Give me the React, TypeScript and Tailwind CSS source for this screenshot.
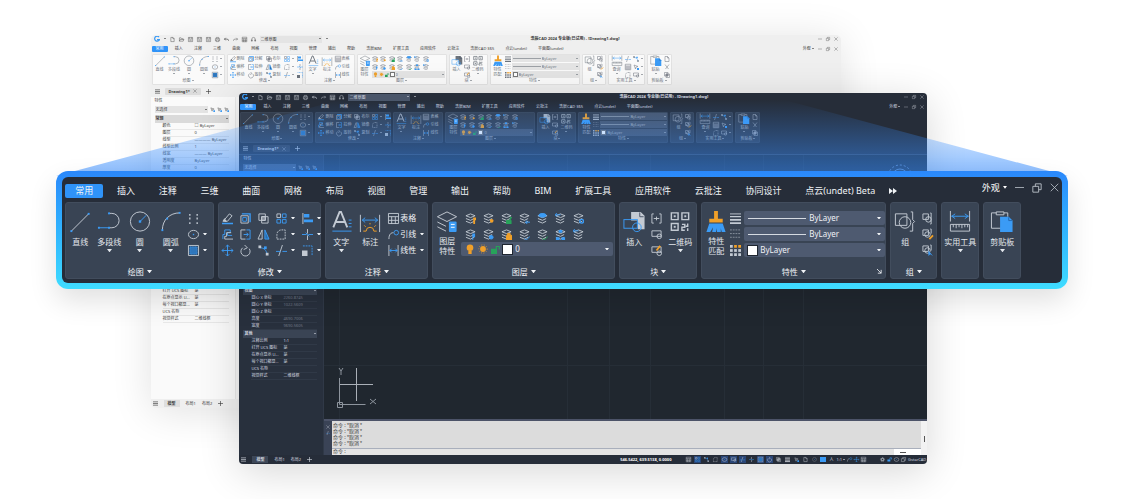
import type { ReactNode } from "react";
import clsx from "clsx";

const BLUE = "#3b9bf5";
const ORANGE = "#f0a029";
const GREEN = "#27a35a";

type Theme = "light" | "dark";

const Dot = ({ x, y, s = 2, fill = BLUE }: { x: number; y: number; s?: number; fill?: string }) => (
  <rect x={x - s / 2} y={y - s / 2} width={s} height={s} fill={fill} stroke="none" />
);

// Large tool icons, 24 x 24
const large: Record<string, ReactNode> = {
  line: <><path d="M3 22 21 4" /><Dot x={3} y={22} /><Dot x={21} y={4} /></>,
  polyline: <><path d="M12 3.500h3a7.500 7.500 0 0 1 0 15h-3" /><path d="M2 18.500h10" stroke={BLUE} /><Dot x={12} y={3.5} /><Dot x={1.5} y={18.500} /><Dot x={12} y={18.500} /></>,
  circle: <><circle cx="12" cy="12" r="10" /><path d="m12 12 6.500-6.500" stroke={BLUE} /><Dot x={12} y={12} s={2.5} /></>,
  arc: <><path d="M3 21C3 10 11 3 21 3" /><Dot x={3} y={21} /><Dot x={8} y={9} /><Dot x={21} y={3} /></>,
  text: <><path d="M4 18 10.500 2h1.500L18.500 18M6.500 12.500H16" strokeWidth="2" /><path d="M3 22h20M20 10.500h3M20 14h3M20 17.500h3" stroke={BLUE} /></>,
  dimension: <><path d="M2 5v18M22 5v18" /><path d="M4 10.500h16M7 8l-3 2.500L7 13M17 8l3 2.500-3 2.500" stroke={BLUE} /><path d="M5 22h3a4 4 0 0 1 8 0h3M12 15v-1.500M7.500 17.500 6 16M16.500 17.500 18 16" stroke={ORANGE} /></>,
  layers: <><path d="M2 7 12 2l10 5-10 5zM2 12.500l9 4.500M2 17.500l9 4.500" /><rect x="14" y="12" width="8" height="11" rx="1" fill={BLUE} stroke="none" /><path d="M16 15h4M16 18h4" stroke="#fff" /></>,
  insert: <><path d="M9 2h10l4 4v14h-7v-9H9z" fill="currentColor" stroke="none" /><path d="M18 2.500V7h4" stroke="#4a5568" /><rect x="1.500" y="10" width="14" height="9" stroke={BLUE} /><circle cx="15" cy="18" r="4.500" stroke={BLUE} /></>,
  qr: <><path d="M3 3h7v7H3zM14 3h7v7h-7zM3 14h7v7H3zM14 15h3v3h-3v3h3M20 14v3h-2M20 19v3" strokeWidth="1.500" /><Dot x={6.5} y={6.5} fill="currentColor" /><Dot x={17.5} y={6.5} fill="currentColor" /><Dot x={6.500} y={17.500} fill="currentColor" /></>,
  brush: <><path d="M10 1h4v8h5v4H5V9h5z" fill={ORANGE} stroke="none" /><path d="M5 14h14l3 9h-4l-1-4v4h-4v-4l-1 4H8l1-5-3 5H2z" fill={BLUE} stroke="none" /></>,
  group: <><path d="M2 4h12v12H2z" /><circle cx="12" cy="13" r="6" /><path d="M18 2h2v8l2 2-2 2v8h-3" /></>,
  measure: <><path d="M2 1v11M22 1v11" /><path d="M3 6.500h18M7 4 3.500 6.500 7 9M17 4l3.500 2.500L17 9" stroke={BLUE} /><path d="M2 15h20v7H2zM5 15v3M8 15v4M11 15v3M14 15v4M17 15v3M20 15v3" /></>,
  clipboard: <><path d="M12 19H1V3h5M14 3h4v4M6 5V2h8v3z" /><path d="M10 7h9l4 4v12H10z" fill={BLUE} stroke="none" /><path d="M19 7.500V11h3.500" stroke="#2468b0" /></>,
};

// Compact tool icons, 12 x 12
const small: Record<string, ReactNode> = {
  points: <path d="M2 1v2M2 5v2M2 10v2M10 1v2M10 5v2M10 10v2" strokeWidth="1.500" />,
  ellipse: <><ellipse cx="6" cy="6" rx="5.500" ry="4.500" /><Dot x={6} y={6} s={1.500} /></>,
  hatch: <><path d="M.5.5h11v11H.5z" /><path d="M2 2h8v8H2z" fill="#2f76bb" stroke={BLUE} strokeDasharray="1 1" /></>,
  erase: <><path d="m3 7 5-6 3 2-5 6H3z" /><path d="M3 6 1 9h4" fill="currentColor" /><path d="M0 11.500h12" stroke={BLUE} strokeWidth="1.500" /></>,
  explode: <><path d="M1 3h8v8H1z" /><path d="M2 1h9v9" stroke={BLUE} strokeWidth="1.500" /><path d="M3 5h4v4H3z" stroke={BLUE} /></>,
  overlap: <><path d="M1 1h7v7H1zM4 4h7v7H4z" /><path d="M4 4h4v4H4z" fill="currentColor" fillOpacity=".5" /></>,
  array: <><path d="M1 1h4v4H1z" /><path d="M7 1h4v4H7zM1 7h4v4H1zM7 7h4v4H7z" stroke={BLUE} /></>,
  align: <><path d="M1 0v12" /><path d="M2 1h6v4H2zM2 7h10v3H2z" fill={BLUE} stroke="none" /></>,
  offset: <><path d="M1 11V6h2V1h6v3H6v3h5" stroke={BLUE} /><path d="M3 11V8h2V4h5M3 11h9" /></>,
  stretch: <><path d="M6 1H1v10h5" /><path d="M7 1h4v10H7M4 6h5M7 4l2 2-2 2" stroke={BLUE} /></>,
  mirror: <><path d="M4.500 1v10H0z" /><path d="M7.500 1v10H12z" stroke={BLUE} fill="#286ead" /></>,
  fillet: <path d="M1 11h9V1H6a5 5 0 0 0-5 5z" strokeDasharray="2 1" />,
  break: <><path d="M6 0v5M6 7v5" /><path d="M0 6h5M7 6h5M4 4l2 2M8 8 6 6" stroke={BLUE} /></>,
  move: <path d="M6 0v12M0 6h12M4 2l2-2 2 2M4 10l2 2 2-2M2 4 0 6l2 2M10 4l2 2-2 2" stroke={BLUE} />,
  rotate: <><path d="M3 3a5 5 0 1 0 7 1" /><path d="m5 0 3 3-4 2" /></>,
  copy: <><path d="M2 3c5 0 7 3 8 7" stroke={BLUE} /><Dot x={2} y={2} s={3} fill="currentColor" /><Dot x={8} y={3} s={3} /><Dot x={10} y={10} s={3} fill="currentColor" /></>,
  trim: <><path d="M7 0 3 12" /><path d="M0 7h5M7 7h5" stroke={BLUE} /></>,
  scale: <><path d="M1 1h10v10" stroke={BLUE} strokeDasharray="2 1" /><path d="M0 6h6v6H0z" fill="currentColor" stroke="none" /></>,
  table: <path d="M.5.5h11v11H.5zM.5 4h11M.5 8h11M4 4v8M8 4v8" />,
  leader: <><path d="M1 11c0-5 2-7 5-7" /><circle cx="9" cy="4" r="2.500" stroke={BLUE} /></>,
  linear: <><path d="M1 0v12M11 0v12" /><path d="M2 6h8M4 4 2 6l2 2M8 4l2 2-2 2" stroke={BLUE} /></>,
  bracket: <path d="M3 1H1v10h2M9 1h2v10H9M3 6h6M6 4v4" />,
  block: <><path d="M1 2h10v6H1z" /><circle cx="9" cy="8" r="2.500" /></>,
  blockEdit: <><path d="M1 2h10v6H1z" /><circle cx="9" cy="9" r="2.500" /><path d="m6 6 4-5" stroke={ORANGE} strokeWidth="2" /></>,
  weights: <><path d="M0 1h12" /><path d="M0 4h12" strokeWidth="1.500" /><path d="M0 7.500h12M0 11h12" strokeWidth="2" /></>,
  dashes: <path d="M0 1h12M0 5h12M0 9h12" strokeDasharray="2 1" opacity=".6" />,
  colors: <>{[1.5, 6, 10.5].map((y) => [1.5, 6, 10.5].map((x) => <Dot key={`${x}-${y}`} x={x} y={y} s={3} fill={y < 6 && x > 2 ? ORANGE : "currentColor"} />))}</>,
  groupAdd: <><path d="M1 1h6v6H1zM9 0h1v12H9" /><circle cx="7" cy="7" r="3" /></>,
  groupEdit: <><path d="M1 1h6v6H1zM9 0h1v5" /><circle cx="6" cy="6" r="3" /><path d="m8 11 4-4" stroke={ORANGE} strokeWidth="2" /></>,
  groupPick: <><path d="M1 1h6v6H1zM9 0h1v6" /><circle cx="6" cy="6" r="3" /><path d="M7 6v6l2-2 3 2z" fill={BLUE} stroke="none" /></>,
  bulb: <><circle cx="6" cy="4.500" r="4" fill={ORANGE} stroke="none" /><path d="M4 8h4v4H4z" fill={ORANGE} stroke="none" /></>,
  sun: <><circle cx="6" cy="6" r="3.500" fill={ORANGE} stroke="none" /><circle cx="6" cy="6" r="5" stroke={ORANGE} strokeDasharray="1 2" /></>,
  lock: <><path d="M0 5h8v7H0z" fill={GREEN} stroke="none" /><path d="M7 6V2h4v4" stroke={GREEN} strokeWidth="1.500" /></>,
  file: <path d="M2 1h5l3 3v7H2zM7 1v3h3" />,
  open: <path d="M1 10V2h4l1 2h4v2M1 10l2-4h9l-2 4z" />,
  save: <path d="M1 1h10v10H1zM3 1v4h6V1M3 8h6" />,
  print: <path d="M3 4V1h6v3M3 9H1V4h10v5H9M3 7h6v4H3z" />,
  undo: <path d="M4 2 1 5l3 3M1 5h6q4 0 4 4" strokeWidth="1.500" />,
  redo: <path d="m8 2 3 3-3 3M11 5H5Q1 5 1 9" />,
  headset: <path d="M2 9V5a4 4 0 0 1 8 0v4M1 7h2v3H1zM9 7h2v3H9z" />,
  select: <><path d="m2 2 3 8 1-4 4-1z" /><path d="M8 8h4v4H8z" fill={BLUE} stroke="none" /></>,
  cut: <path d="m2 1 7 9M10 1 3 10" />,
  lockOpen: <><path d="M1 6h7v5H1z" fill={BLUE} stroke="none" /><path d="M7 6V2h4v4" stroke={BLUE} strokeWidth="1.500" /></>,
  gear: <><circle cx="6" cy="6" r="3" strokeWidth="2" /><circle cx="6" cy="6" r="5" strokeDasharray="2 2" /></>,
  menu: <path d="M0 2h12M0 6h12M0 10h12" strokeWidth="1.500" />,
  plus: <path d="M6 0v12M0 6h12" strokeWidth="1.500" />,
  close: <path d="m1 1 10 10M11 1 1 11" />,
  restore: <path d="M1 4h7v7H1zM4 4V1h7v7H8" />,
  minimize: <path d="M0 6h12" />,
};

const layerBadges = [
  <path d="M9 5h3v3h-1v4H9z" fill={ORANGE} stroke="none" />,
  <circle cx="9.500" cy="8.500" r="2" fill={ORANGE} stroke="none" />,
  <path d="M6 8h5v4H6zM10 8V5h2" fill={GREEN} stroke={GREEN} />,
  <path d="M7 10h5M9 8l-2 2 2 2" stroke={BLUE} />,
  <ellipse cx="6" cy="2.500" rx="4" ry="2" fill={BLUE} stroke={BLUE} />,
  <path d="M0 2h6M2 0 0 2l2 2" stroke={BLUE} />,
  <circle cx="9.500" cy="9" r="2" stroke={BLUE} strokeWidth="1.500" />,
  <path d="M8 5h3v4H9v3H8z" fill={BLUE} stroke="none" />,
  <circle cx="9" cy="9" r="2" fill={BLUE} stroke={BLUE} />,
  <path d="M6 7h6v5H6zM7 7V5h3v2" fill={ORANGE} stroke={ORANGE} />,
  <path d="m6 10 2 2 4-4" stroke={BLUE} />,
  <path d="m6 10 2 2 4-4" stroke={GREEN} />,
  <path d="M1 9h4v3H1zM7 9h4v3H7zM4 1h4v3H4z" fill={BLUE} stroke="none" />,
  <path d="M0 2h6M2 0 0 2l2 2" stroke={BLUE} />,
];

const Icon = ({ name, className }: { name: string; className: string }) => {
  const box = name in large ? "0 0 24 25" : "0 0 12 12";
  return (
    <svg viewBox={box} className={clsx("shrink-0 overflow-visible", className)} fill="none" stroke="currentColor" strokeWidth="1" aria-hidden="true">
      {large[name] ?? small[name]}
    </svg>
  );
};

const LayerIcon = ({ index, className }: { index: number; className: string }) => (
  <svg viewBox="0 0 12 12" className={clsx("shrink-0", className)} fill="none" stroke="currentColor" aria-hidden="true">
    <path d="m1 3 5-2 5 2-5 2zM1 6l5 2 4-2M1 9l5 2 4-2" />
    {layerBadges[index]}
  </svg>
);

const Caret = ({ className = "w-[5px]" }: { className?: string }) => (
  <svg viewBox="0 0 6 4" className={clsx("shrink-0", className)} fill="currentColor" aria-hidden="true">
    <path d="M0 0h6L3 4z" />
  </svg>
);

/* ---------- enlarged ribbon ---------- */

const Panel = ({ title, className, corner, children }: { title?: string; className: string; corner?: boolean; children: ReactNode }) => (
  <section className={clsx("relative flex h-[77px] shrink-0 flex-col rounded-[3px] border border-[#424d5d] bg-[#394454] pt-[7px]", className)}>
    <div className="flex flex-1">{children}</div>
    {title && (
      <button className="flex h-[13px] items-center justify-center gap-[3px]">
        {title}
        <Caret />
      </button>
    )}
    {corner && (
      <svg viewBox="0 0 6 6" className="absolute right-[3px] bottom-1 w-[5px]" fill="none" stroke="currentColor"><path d="m0 0 5 5M5 1v4H1" /></svg>
    )}
  </section>
);

const Tool = ({ icon, label, caret, className }: { icon: string; label: string | string[]; caret?: boolean; className: string }) => (
  <button className={clsx("flex shrink-0 flex-col items-center text-[#e3e7ec]", className)}>
    <Icon name={icon} className="size-6 text-[#c3cad3]" />
    {Array.isArray(label) ? (
      <span className="pt-[2px] leading-[10px]">{label[0]}<br />{label[1]}</span>
    ) : (
      <span className="h-[14px] leading-[15px] whitespace-nowrap">{label}</span>
    )}
    {caret && <Caret className="mt-px w-[5px]" />}
  </button>
);

const MiniTool = ({ icon, caret, label }: { icon: string; caret?: boolean; label?: string }) => (
  <button className="flex h-4 items-center gap-px" aria-label={label ? undefined : icon}>
    <Icon name={icon} className="size-[11px] text-[#c3cad3]" />
    {label}
    {caret && <Caret className="ml-[3px] w-1" />}
  </button>
);

const BigSelect = ({ label, value, children }: { label: string; value: string; children: ReactNode }) => (
  <label className="flex h-[14px] items-center gap-[3px] rounded-[2px] bg-[#4e5a70] px-1">
    {children}
    <select aria-label={label} className="h-[14px] min-w-0 flex-1 appearance-none bg-transparent text-[8px] leading-[14px] text-[#eef1f5]">
      <option>{value}</option>
    </select>
    <Caret className="w-1" />
  </label>
);

const modifyIcons = [
  ["erase", "explode", "overlap", "array", "align"],
  ["offset", "stretch", "mirror", "fillet", "break"],
  ["move", "rotate", "copy", "trim", "scale"],
];

const bigTabs = ["常用", "插入", "注释", "三维", "曲面", "网格", "布局", "视图", "管理", "输出", "帮助", "BIM", "扩展工具", "应用软件", "云批注", "协同设计", "点云(undet) Beta"];

const MagnifiedRibbon = () => (
  <div className="absolute top-[171px] right-[5%] left-[5%] rounded-[12px] bg-linear-to-b from-[#2b88fb] to-[#3fdcff] p-[6px] shadow-[0_12px_28px_rgba(0,0,0,0.12)]">
    <div className="overflow-hidden rounded-[6px] bg-[#262d39] px-[3px] pb-1 text-[8px] text-[#f0f3f6]">
      <header className="flex h-[25px] items-center">
        <nav className="flex w-[832px] items-center justify-between pt-[3px] text-[9px]">
          {bigTabs.map((tab, i) => (
            <button key={tab} className={clsx("h-[14px] px-[10px] leading-[14px] whitespace-nowrap", i === 0 && "rounded-[2px] bg-[#2f93f8]")}>{tab}</button>
          ))}
          <button aria-label="更多">
            <svg viewBox="0 0 8 6" className="w-2" fill="currentColor"><path d="m0 0 4 3-4 3zM4 0l4 3-4 3z" /></svg>
          </button>
        </nav>
        <div className="ml-auto flex items-center gap-2 pb-1 text-[#c6ccd4]">
          <button className="flex items-center gap-[3px] text-[9px] text-white">外观<Caret className="w-1" /></button>
          <button aria-label="最小化"><Icon name="minimize" className="size-[9px]" /></button>
          <button aria-label="还原"><Icon name="restore" className="size-[10px]" /></button>
          <button aria-label="关闭"><Icon name="close" className="size-[9px]" /></button>
        </div>
      </header>

      <div className="flex gap-1">
        <Panel title="绘图" className="w-[149px]">
          <Tool icon="line" label="直线" className="w-7" />
          <Tool icon="polyline" label="多段线" caret className="w-[30px]" />
          <Tool icon="circle" label="圆" caret className="w-[31px]" />
          <Tool icon="arc" label="圆弧" caret className="w-[31px]" />
          <div className="ml-[2px] flex flex-col">
            <MiniTool icon="points" />
            <MiniTool icon="ellipse" caret />
            <MiniTool icon="hatch" caret />
          </div>
        </Panel>

        <Panel title="修改" className="w-[103px]">
          <div className="flex flex-1 flex-col px-[3px]">
            {modifyIcons.map((row) => (
              <div key={row[0]} className="flex gap-[7px]">
                {row.map((icon, i) => <MiniTool key={icon} icon={icon} caret={i > 2} />)}
              </div>
            ))}
          </div>
        </Panel>

        <Panel title="注释" className="w-[103px]">
          <Tool icon="text" label="文字" caret className="w-[30px]" />
          <Tool icon="dimension" label="标注" className="w-7" />
          <div className="ml-1 flex flex-col">
            <MiniTool icon="table" label="表格" />
            <MiniTool icon="leader" label="引线" caret />
            <MiniTool icon="linear" label="线性" caret />
          </div>
        </Panel>

        <Panel title="图层" className="w-[183px]">
          <Tool icon="layers" label={["图层", "特性"]} className="w-7" />
          <div className="flex flex-1 flex-col pr-px">
            <div className="grid w-[126px] grid-cols-7">
              {layerBadges.map((_, i) => (
                <button key={i} aria-label={`图层工具 ${i + 1}`} className="flex h-4 items-center justify-center">
                  <LayerIcon index={i} className="size-[11px] text-[#c3cad3]" />
                </button>
              ))}
            </div>
            <BigSelect label="图层" value="0">
              <Icon name="bulb" className="size-[10px]" />
              <Icon name="sun" className="size-[10px]" />
              <Icon name="lock" className="size-[9px]" />
              <span className="size-[9px] bg-white outline outline-[#1f2630]" />
            </BigSelect>
          </div>
        </Panel>

        <Panel title="块" className="w-[78px]">
          <Tool icon="insert" label="插入" className="w-7" />
          <div className="flex flex-col px-[3px]">
            <MiniTool icon="bracket" />
            <MiniTool icon="block" />
            <MiniTool icon="blockEdit" />
          </div>
          <Tool icon="qr" label="二维码" caret className="ml-px w-7" />
        </Panel>

        <Panel title="特性" corner className="w-[185px]">
          <Tool icon="brush" label={["特性", "匹配"]} className="w-7" />
          <div className="flex flex-col pr-[3px]">
            <MiniTool icon="weights" />
            <MiniTool icon="dashes" />
            <MiniTool icon="colors" />
          </div>
          <div className="flex flex-1 flex-col gap-[2px] pt-px">
            <BigSelect label="线宽" value="ByLayer"><span className="h-px w-[58px] bg-[#d5dae1]" /></BigSelect>
            <BigSelect label="线型" value="ByLayer"><span className="h-px w-[58px] bg-[#d5dae1]" /></BigSelect>
            <BigSelect label="颜色" value="ByLayer"><span className="size-[9px] bg-white outline outline-[#1f2630]" /></BigSelect>
          </div>
        </Panel>

        <Panel title="组" className="w-[47px]">
          <Tool icon="group" label="组" className="w-7" />
          <div className="ml-[3px] flex flex-col">
            <MiniTool icon="groupAdd" />
            <MiniTool icon="groupEdit" />
            <MiniTool icon="groupPick" />
          </div>
        </Panel>

        <Panel className="w-[38px]"><Tool icon="measure" label="实用工具" caret className="w-9" /></Panel>
        <Panel className="w-[38px]"><Tool icon="clipboard" label="剪贴板" caret className="w-9" /></Panel>
      </div>
    </div>
  </div>
);

/* ---------- application windows ---------- */

const skins = {
  light: {
    panel: "bg-[#fafafa] border-[#e2e2e2]",
    icon: "text-[#6c737c]",
    field: "bg-[#e4e4e4]",
    side: "bg-[#fafafa]",
    head: "bg-[#dadada]",
    rule: "border-[#e8e8e8]",
    active: "bg-[#dedede]",
  },
  dark: {
    panel: "bg-[#343e4e] border-[#3a4555]",
    icon: "text-[#a9b2be]",
    field: "bg-[#4a566a]",
    side: "bg-[#28303d]",
    head: "bg-[#3a4454]",
    rule: "border-[#303947]",
    active: "bg-[#3d4757]",
  },
};

const tabs = ["常用", "插入", "注释", "三维", "曲面", "网格", "布局", "视图", "管理", "输出", "帮助", "浩辰BIM", "扩展工具", "应用软件", "云批注", "浩辰CAD 365", "点云(undet)", "平面图(undet)"];

const quickIcons = ["file", "open", "save", "save", "save", "print", "undo", "redo", "table", "headset"];

const SmallPanel = ({ title, theme, className, children }: { title: string; theme: Theme; className: string; children: ReactNode }) => (
  <section className={clsx("flex h-[31px] shrink-0 flex-col rounded-[1px] border", skins[theme].panel, className)}>
    <div className="flex h-[23px] items-start">{children}</div>
    <button className="flex h-[6px] items-center justify-center gap-px leading-[6px]">{title}<Caret className="w-[2px]" /></button>
  </section>
);

const SmallTool = ({ icon, label, caret, className }: { icon: string; label: string | string[]; caret?: boolean; className: string }) => (
  <button className={clsx("flex shrink-0 flex-col items-center", className)}>
    <Icon name={icon} className="size-3" />
    <span className="leading-[5px] whitespace-nowrap">{Array.isArray(label) ? <>{label[0]}<br />{label[1]}</> : label}</span>
    {caret && <Caret className="mt-px w-[2px]" />}
  </button>
);

const SmallColumn = ({ icons, labels, caret }: { icons: string[]; labels?: string[]; caret?: boolean }) => (
  <div className="flex flex-col">
    {icons.map((icon, i) => (
      <button key={icon} className="flex h-2 items-center gap-px leading-[8px] whitespace-nowrap" aria-label={labels ? undefined : icon}>
        <Icon name={icon} className="size-[6px]" />
        {labels?.[i]}
        {caret && <Caret className="ml-px w-[2px]" />}
      </button>
    ))}
  </div>
);

const SmallSelect = ({ theme, label, value, children }: { theme: Theme; label: string; value: string; children?: ReactNode }) => (
  <label className={clsx("flex h-[7px] items-center gap-px px-px", skins[theme].field)}>
    {children}
    <select aria-label={label} className="h-[7px] min-w-0 flex-1 appearance-none bg-transparent text-[4px] leading-[7px]"><option>{value}</option></select>
    <Caret className="w-[2px]" />
  </label>
);

const WindowChrome = ({ theme }: { theme: Theme }) => (
  <>
    <div className="flex h-2 items-center gap-[4px] px-[3px]">
      <svg viewBox="0 0 12 12" className="w-[6px]" fill="none" stroke={BLUE} strokeWidth="2.500"><path d="M10 2a5 5 0 1 0 1 5H6" /></svg>
      <Caret className="w-[2px]" />
      {quickIcons.map((icon, i) => (
        <button key={i} aria-label={icon}><Icon name={icon} className="size-[5px]" /></button>
      ))}
      <div className="w-[62px]"><SmallSelect theme={theme} label="工作空间" value="二维草图" /></div>
      <Caret className="w-[2px]" />
      <h1 className="flex-1 pl-[199px] font-bold whitespace-nowrap">浩辰CAD 2024 专业版(已试用) - [Drawing1.dwg]</h1>
      <Icon name="minimize" className="size-1" />
      <Icon name="restore" className="size-1" />
      <Icon name="close" className="size-1" />
    </div>
    <div className="flex h-[11px] items-center pt-px pr-[3px] pl-px">
      <nav className="flex w-[416px] items-center justify-between">
        {tabs.map((tab, i) => (
          <button key={tab} className={clsx("h-[6px] px-1 leading-[6px] whitespace-nowrap", i === 0 && "rounded-[1px] bg-[#2f93f8] text-white")}>{tab}</button>
        ))}
      </nav>
      <div className="ml-auto flex items-center gap-1">
        <button className="flex items-center gap-px">外观<Caret className="w-[2px]" /></button>
        <Icon name="minimize" className="size-1" />
        <Icon name="restore" className="size-1" />
        <Icon name="close" className="size-1" />
      </div>
    </div>
  </>
);

const SmallRibbon = ({ theme }: { theme: Theme }) => (
  <div className={clsx("flex gap-[2px] px-px", skins[theme].icon)}>
    <SmallPanel theme={theme} title="绘图" className="w-[73px]">
      <SmallTool icon="line" label="直线" className="w-[14px]" />
      <SmallTool icon="polyline" label="多段线" caret className="w-[15px]" />
      <SmallTool icon="circle" label="圆" caret className="w-[15px]" />
      <SmallTool icon="arc" label="圆弧" caret className="w-[15px]" />
      <SmallColumn icons={["points", "ellipse", "hatch"]} caret />
    </SmallPanel>
    <SmallPanel theme={theme} title="修改" className="w-[76px]">
      <div className="flex gap-[3px] px-[2px]">
        <SmallColumn icons={["erase", "offset", "move"]} labels={["删除", "偏移", "移动"]} />
        <SmallColumn icons={["explode", "stretch", "rotate"]} labels={["分解", "拉伸", "旋转"]} />
        <SmallColumn icons={["overlap", "mirror", "copy"]} labels={["布尔", "镜像", "复制"]} />
        <SmallColumn icons={["array", "fillet", "trim"]} caret />
        <SmallColumn icons={["align", "break", "scale"]} caret />
      </div>
    </SmallPanel>
    <SmallPanel theme={theme} title="注释" className="w-[50px]">
      <SmallTool icon="text" label="文字" caret className="w-[14px]" />
      <SmallTool icon="dimension" label="标注" className="w-[15px]" />
      <SmallColumn icons={["table", "leader", "linear"]} labels={["表格", "引线", "线性"]} />
    </SmallPanel>
    <SmallPanel theme={theme} title="图层" className="w-[90px]">
      <SmallTool icon="layers" label={["图层", "特性"]} className="w-[14px]" />
      <div className="flex flex-1 flex-col pr-px">
        <div className="grid w-[60px] grid-cols-7">
          {layerBadges.map((_, i) => (
            <span key={i} className="flex h-2 items-center"><LayerIcon index={i} className="size-[6px]" /></span>
          ))}
        </div>
        <SmallSelect theme={theme} label="图层" value="0">
          <Icon name="bulb" className="size-[5px]" />
          <Icon name="sun" className="size-[5px]" />
          <Icon name="lock" className="size-[4px]" />
          <span className="size-[5px] border border-[#777] bg-white" />
        </SmallSelect>
      </div>
    </SmallPanel>
    <SmallPanel theme={theme} title="块" className="w-[39px]">
      <SmallTool icon="insert" label="插入" className="w-[14px]" />
      <SmallColumn icons={["bracket", "block", "blockEdit"]} />
      <SmallTool icon="qr" label="二维码" caret className="w-[16px]" />
    </SmallPanel>
    <SmallPanel theme={theme} title="特性" className="w-[90px]">
      <SmallTool icon="brush" label={["特性", "匹配"]} className="w-[14px]" />
      <SmallColumn icons={["weights", "dashes", "colors"]} />
      <div className="flex flex-1 flex-col gap-px pl-px">
        <SmallSelect theme={theme} label="线宽" value="ByLayer"><span className="h-px w-7 bg-current opacity-60" /></SmallSelect>
        <SmallSelect theme={theme} label="线型" value="ByLayer"><span className="h-px w-7 bg-current opacity-60" /></SmallSelect>
        <SmallSelect theme={theme} label="颜色" value="ByLayer"><span className="size-[5px] border border-[#777] bg-white" /></SmallSelect>
      </div>
    </SmallPanel>
    <SmallPanel theme={theme} title="组" className="w-6">
      <SmallTool icon="group" label="组" className="w-[14px]" />
      <SmallColumn icons={["groupAdd", "groupEdit", "groupPick"]} />
    </SmallPanel>
    <SmallPanel theme={theme} title="实用工具" className="w-[37px]">
      <SmallTool icon="measure" label="查询" caret className="w-4" />
      <div className="flex gap-[2px]">
        <SmallColumn icons={["trim", "table", "fillet"]} />
        <SmallColumn icons={["copy", "select", "block"]} caret />
      </div>
    </SmallPanel>
    <SmallPanel theme={theme} title="剪贴板" className="w-[25px]">
      <SmallTool icon="clipboard" label="粘贴" caret className="w-4" />
      <SmallColumn icons={["file", "cut", "overlap"]} />
    </SmallPanel>
  </div>
);

type Row = [string, string];

const generalRows: Row[] = [["颜色", "□ ByLayer"], ["图层", "0"], ["线型", "———— ByLayer"], ["线型比例", "1"], ["线宽", "——— ByLayer"], ["透明度", "ByLayer"], ["厚度", "0"]];
const viewRows: Row[] = [["圆心 X 坐标", "2260.8745"], ["圆心 Y 坐标", "1022.5609"], ["圆心 Z 坐标", ""], ["高度", "4690.7006"], ["宽度", "9690.5605"]];
const ucsRows: Row[] = [["打开 UCS 图标", "是"], ["在原点显示 U...", "是"], ["每个视口都显...", "是"], ["UCS 名称", ""], ["视觉样式", "二维线框"]];

const PropertyGroup = ({ theme, title, rows }: { theme: Theme; title?: string; rows: Row[] }) => (
  <div>
    {title && (
      <h3 className={clsx("flex h-2 items-center justify-between px-px font-bold", skins[theme].head)}>{title}<Caret className="w-[2px]" /></h3>
    )}
    <dl>
      {rows.map(([name, value]) => (
        <div key={name} className={clsx("ml-2 flex h-[7px] items-center border-b leading-[6px] whitespace-nowrap", skins[theme].rule)}>
          <dt className="w-8 shrink-0">{name}</dt>
          <dd className={clsx(/^\d{4}/.test(value) && "opacity-40")}>{value}</dd>
        </div>
      ))}
    </dl>
  </div>
);

const PropertySheet = ({ theme, children }: { theme: Theme; children: ReactNode }) => (
  <aside className={clsx("flex w-[85px] shrink-0 flex-col overflow-hidden border-r pr-[6px] pl-1", skins[theme].side, skins[theme].rule)}>
    <h2 className="h-[7px] leading-[7px]">特性</h2>
    <div className="flex h-[11px] items-center gap-[2px]">
      <div className="flex-1"><SmallSelect theme={theme} label="选择" value="无选择" /></div>
      {[0, 1, 2].map((i) => <button key={i} aria-label="选择对象"><Icon name="select" className="size-[5px]" /></button>)}
    </div>
    {children}
  </aside>
);

const DocumentTabs = ({ className }: { className?: string }) => (
  <div className={clsx("flex h-3 items-center gap-[5px] px-1", className)}>
    <Icon name="menu" className="size-[5px]" />
    <span className="flex items-center gap-[3px] rounded-[1px] bg-current/10 px-1 leading-[7px] font-bold">Drawing1* <Icon name="close" className="size-[4px]" /></span>
    <Icon name="plus" className="size-[5px]" />
  </div>
);

const LayoutTabs = ({ theme }: { theme: Theme }) => (
  <div className="flex shrink-0 items-center gap-[6px]">
    <Icon name="menu" className="size-[5px]" />
    <button className={clsx("h-[7px] px-1 leading-[7px] font-bold", skins[theme].active)}>模型</button>
    <button>布局1</button>
    <button>布局2</button>
    <Icon name="plus" className="size-[5px]" />
  </div>
);

const LightWindow = () => (
  <div className="absolute top-[35px] left-[13.4%] flex h-[373px] w-[61.4%] flex-col overflow-hidden rounded-[5px] bg-[#efefef] text-[4px] text-[#3a3a3a] shadow-[0_4px_40px_rgba(0,0,0,0.12)]">
    <WindowChrome theme="light" />
    <SmallRibbon theme="light" />
    <DocumentTabs />
    <div className="flex min-h-0 flex-1 bg-[#f5f5f5]">
      <PropertySheet theme="light">
        <PropertyGroup theme="light" title="常规" rows={generalRows} />
        <div className="h-[116px] shrink-0" />
        <PropertyGroup theme="light" rows={ucsRows} />
      </PropertySheet>
    </div>
    <div className="flex h-[9px] items-center px-[2px]"><LayoutTabs theme="light" /></div>
  </div>
);

const statusIcons = ["table", "array", "copy", "fillet", "ellipse", "block", "trim", "break", "hatch", "rotate", "overlap", "weights", "select", "file", "circle"];

const Canvas = () => (
  <svg className="min-h-0 w-full flex-1 bg-[#20272f]" fill="none" stroke="#262e37" role="img" aria-label="绘图区">
    <path d="M15.500 0v264M243.500 0v264M285.500 0v264M326.500 0v264M400.500 0v264M439.500 0v264M479.500 0v264M0 210.500h620M0 58.500h620" />
    <g stroke="#8d949d">
      <path d="M15.500 223v26.500h26M13.500 247.500h5v5h-5z" />
      <path d="M16 229.500h33M32.500 213v33" stroke="#aab0b8" />
      <path d="m15 213 2 3 2-3M17 216v4M46 244l6 5M52 244l-6 5" />
    </g>
    <g stroke="#6f8fb8"><circle cx="576" cy="22" r="12" strokeDasharray="2 2" /><circle cx="576" cy="22" r="8" /></g>
  </svg>
);

const DarkWindow = () => (
  <div className="absolute top-[93px] left-[21.3%] flex h-[371px] w-[61.2%] flex-col overflow-hidden rounded-[4px] bg-[#262d39] text-[4px] text-[#d4d9e0] shadow-[0_8px_40px_rgba(0,0,0,0.16)]">
    <WindowChrome theme="dark" />
    <SmallRibbon theme="dark" />
    <DocumentTabs className="border-b border-[#3b4657]" />
    <div className="flex min-h-0 flex-1">
      <PropertySheet theme="dark">
        <div className="h-[114px] shrink-0" />
        <PropertyGroup theme="dark" title="视图" rows={viewRows} />
        <PropertyGroup theme="dark" title="其他" rows={[["注释比例", "1:1"], ...ucsRows]} />
      </PropertySheet>
      <main className="flex min-w-0 flex-1 flex-col">
        <Canvas />
        <div className="flex h-9 shrink-0 border-t-2 border-[#4c5368]">
          <div className="flex w-2 flex-col items-center gap-[2px] bg-[#3a4356] pt-1">
            <Icon name="close" className="size-1" />
            <Icon name="trim" className="size-1" />
          </div>
          <div className="flex flex-1 flex-col justify-end bg-[#dcdcdc] font-mono text-[5px] leading-[6px] text-[#333]">
            {[0, 1, 2, 3].map((i) => <p key={i} className="pl-px">命令:*取消*</p>)}
            <label className="mt-px flex h-[7px] items-center border-t border-[#a9afbc] bg-[#e4e4e4] pl-px">
              命令:
              <input aria-label="命令" className="min-w-0 flex-1 bg-transparent" />
              <span className="flex h-full w-[27px] items-center bg-white pl-[6px]"><span className="h-px w-[6px] bg-[#555]" /></span>
            </label>
          </div>
          <div className="flex w-[6px] flex-col items-center bg-[#f2f2f2] pt-[15px]"><span className="h-[6px] w-px bg-[#555]" /></div>
        </div>
      </main>
    </div>
    <footer className="flex h-[9px] items-center gap-[2px] pr-px pl-[2px]">
      <LayoutTabs theme="dark" />
      <span className="ml-auto pr-3 font-bold text-white">546.5422, 639.5138, 0.0000</span>
      {statusIcons.map((icon, i) => (
        <button key={icon} aria-label={icon} className={clsx("flex size-[7px] shrink-0 items-center justify-center", [1, 4, 5, 6, 8, 9].includes(i) && "bg-[#2a4677]")}>
          <Icon name={icon} className="size-[5px]" />
        </button>
      ))}
      <span className="h-[5px] w-[6px] bg-[#3b9bf5]" />
      <span className="px-px">人</span>
      <span className="flex items-center gap-px">1:1 <Caret className="w-[2px]" /></span>
      <Icon name="leader" className="size-[5px]" />
      <Icon name="move" className="size-[5px]" />
      <Icon name="table" className="size-[5px]" />
      <Icon name="gear" className="ml-3 size-[5px]" />
      <Icon name="lockOpen" className="size-[5px]" />
      <Icon name="ellipse" className="size-[5px]" />
      <Icon name="restore" className="size-[5px]" />
      <span>GstarCAD</span>
    </footer>
  </div>
);

// Light cone that spreads from the small ribbon to the enlarged one
const Beam = () => (
  <div className="pointer-events-none absolute top-[100px] right-[5%] left-[5%] h-[76px] bg-linear-to-b from-[#3a8fff]/0 to-[#3a8fff]/60 [clip-path:polygon(28%_0,72%_0,100%_100%,0_100%)]" />
);

export default function App() {
  return (
    <div lang="zh-CN" className="relative h-screen min-h-[499px] overflow-hidden bg-white font-['Noto_Sans','Noto_Sans_CJK_SC',sans-serif]">
      <LightWindow />
      <DarkWindow />
      <Beam />
      <MagnifiedRibbon />
    </div>
  );
}
